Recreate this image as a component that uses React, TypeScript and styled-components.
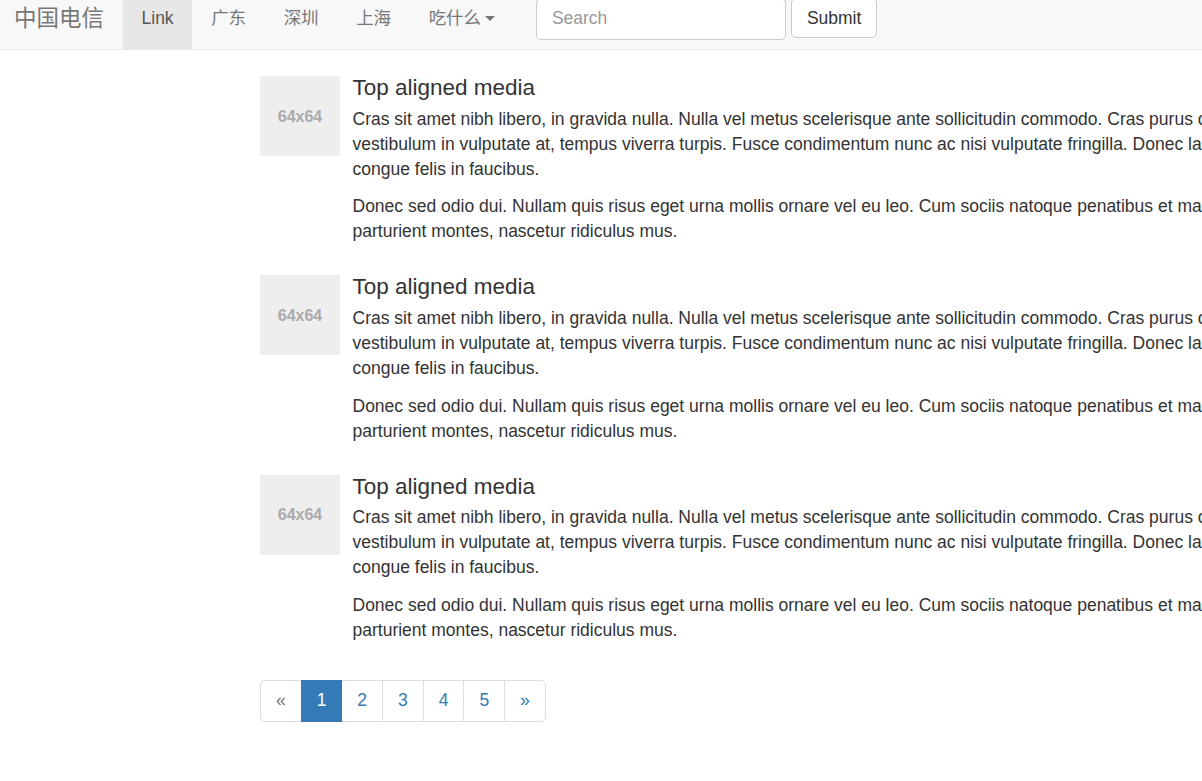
import React from "react";
import styled, { createGlobalStyle } from "styled-components";

const GlobalStyle = createGlobalStyle`
  html, body {
    margin: 0;
    padding: 0;
    overflow: hidden;
    background: #fff;
  }
  body {
    font-family: "Liberation Sans", Arial, "Noto Sans CJK SC", sans-serif;
    font-size: 17.5px;
    line-height: 25px;
    color: #333;
  }
  * { box-sizing: border-box; }
`;

const Navbar = styled.nav`
  margin-top: -13px;
  height: 63px;
  background: #f8f8f8;
  border-bottom: 1px solid #e7e7e7;
  display: flex;
  align-items: stretch;
  font-family: "Liberation Sans", Arial, "Noto Sans CJK SC", sans-serif;
`;

const Brand = styled.a`
  display: flex;
  align-items: center;
  padding: 0 18.75px 0 14px;
  font-size: 22.5px;
  color: #777;
  text-decoration: none;
`;

const NavList = styled.ul`
  display: flex;
  list-style: none;
  margin: 0;
  padding: 0;
`;

const NavItem = styled.li<{ $active?: boolean }>`
  display: flex;
  align-items: center;
  padding: 0 18.75px;
  color: ${(p) => (p.$active ? "#555" : "#777")};
  background: ${(p) => (p.$active ? "#e7e7e7" : "transparent")};
  font-size: 17.5px;
  line-height: 25px;
  cursor: pointer;
`;

const Caret = styled.span`
  display: inline-block;
  width: 0;
  height: 0;
  margin-left: 4px;
  vertical-align: middle;
  border-top: 5px solid #777;
  border-left: 5px solid transparent;
  border-right: 5px solid transparent;
`;

const NavForm = styled.form`
  display: flex;
  align-items: flex-start;
  gap: 5px;
  padding-top: 10.5px;
  margin-left: 22px;
`;

const SearchInput = styled.input`
  width: 250px;
  height: 42px;
  padding: 7.5px 15px;
  font-family: inherit;
  font-size: 17.5px;
  color: #555;
  background: #fff;
  border: 1px solid #ccc;
  border-radius: 5px;
  box-shadow: inset 0 1px 1px rgba(0, 0, 0, 0.075);
  outline: none;
  &::placeholder { color: #999; }
`;

const SubmitButton = styled.button`
  height: 40.5px;
  padding: 7.5px 15px;
  font-family: inherit;
  font-size: 17.5px;
  line-height: 25px;
  color: #333;
  background: #fff;
  border: 1px solid #ccc;
  border-radius: 5px;
  cursor: pointer;
`;

const Content = styled.main`
  margin: 26px 0 0 260px;
  display: flex;
  flex-direction: column;
  gap: 18.5px;
`;

const Media = styled.div`
  display: flex;
  align-items: flex-start;
`;

const Placeholder = styled.div`
  flex: 0 0 80px;
  width: 80px;
  height: 80px;
  margin-right: 12.5px;
  background: #eee;
  color: #aaa;
  font-weight: bold;
  font-size: 16px;
  display: flex;
  align-items: center;
  justify-content: center;
`;

const MediaBody = styled.div`
  flex: 0 0 925px;
  width: 925px;
`;

const Heading = styled.h4`
  margin: 0 0 6px;
  font-size: 22.5px;
  font-weight: 500;
  line-height: 24.75px;
`;

const Para = styled.p`
  margin: 0 0 12.5px;
`;

const Pagination = styled.ul`
  display: flex;
  list-style: none;
  margin: 6px 0 25px;
  padding: 0;
`;

const PageLink = styled.li<{ $active?: boolean; $disabled?: boolean; $first?: boolean; $last?: boolean }>`
  width: 41.7px;
  height: 42px;
  margin-left: ${(p) => (p.$first ? "0" : "-1px")};
  display: flex;
  align-items: center;
  justify-content: center;
  border: 1px solid ${(p) => (p.$active ? "#337ab7" : "#ddd")};
  background: ${(p) => (p.$active ? "#337ab7" : "#fff")};
  color: ${(p) => (p.$active ? "#fff" : p.$disabled ? "#777" : "#337ab7")};
  border-radius: ${(p) => (p.$first ? "5px 0 0 5px" : p.$last ? "0 5px 5px 0" : "0")};
  position: relative;
  z-index: ${(p) => (p.$active ? 2 : 1)};
  font-size: 17.5px;
  cursor: pointer;
`;

const p1 =
  "Cras sit amet nibh libero, in gravida nulla. Nulla vel metus scelerisque ante sollicitudin commodo. Cras purus odio, vestibulum in vulputate at, tempus viverra turpis. Fusce condimentum nunc ac nisi vulputate fringilla. Donec lacinia congue felis in faucibus.";
const p2 =
  "Donec sed odio dui. Nullam quis risus eget urna mollis ornare vel eu leo. Cum sociis natoque penatibus et magnis dis parturient montes, nascetur ridiculus mus.";

export default function App() {
  return (
    <>
      <GlobalStyle />
      <Navbar>
        <Brand href="#">中国电信</Brand>
        <NavList>
          <NavItem $active>Link</NavItem>
          <NavItem>广东</NavItem>
          <NavItem>深圳</NavItem>
          <NavItem>上海</NavItem>
          <NavItem>
            吃什么
            <Caret />
          </NavItem>
        </NavList>
        <NavForm onSubmit={(e) => e.preventDefault()}>
          <SearchInput placeholder="Search" />
          <SubmitButton type="submit">Submit</SubmitButton>
        </NavForm>
      </Navbar>
      <Content>
        {[0, 1, 2].map((i) => (
          <Media key={i}>
            <Placeholder>64x64</Placeholder>
            <MediaBody>
              <Heading>Top aligned media</Heading>
              <Para>{p1}</Para>
              <Para>{p2}</Para>
            </MediaBody>
          </Media>
        ))}
        <Pagination>
          <PageLink $first $disabled>«</PageLink>
          <PageLink $active>1</PageLink>
          <PageLink>2</PageLink>
          <PageLink>3</PageLink>
          <PageLink>4</PageLink>
          <PageLink>5</PageLink>
          <PageLink $last>»</PageLink>
        </Pagination>
      </Content>
    </>
  );
}
